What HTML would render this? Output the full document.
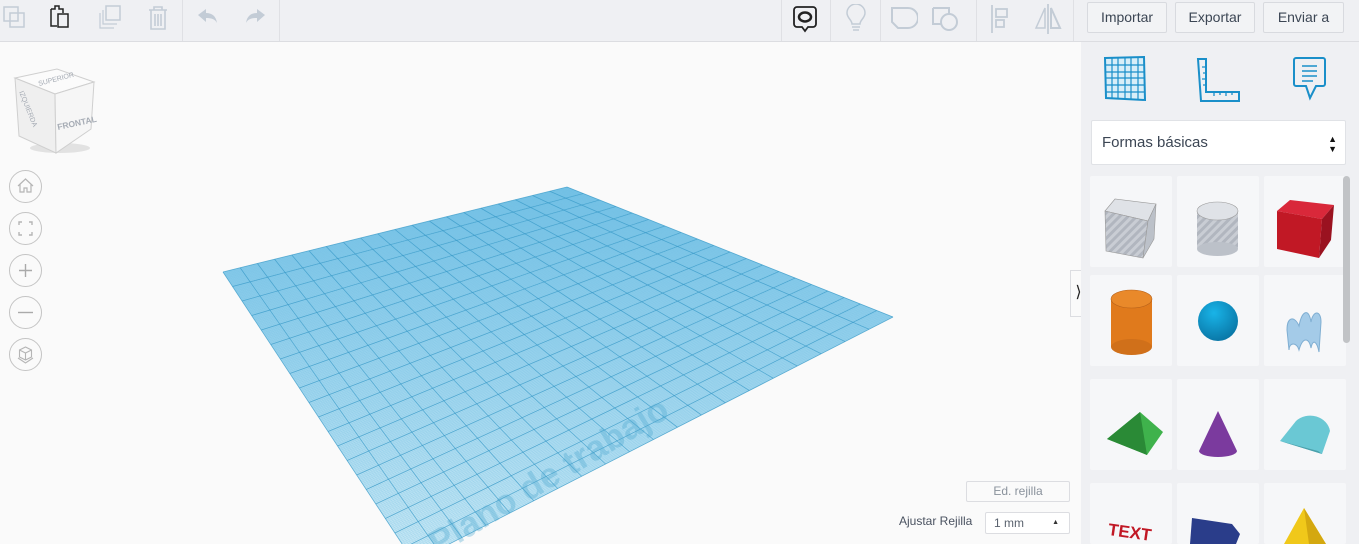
<!DOCTYPE html>
<html><head><meta charset="utf-8"><style>
*{box-sizing:border-box;margin:0;padding:0}
html,body{width:1359px;height:544px;overflow:hidden}
body{background:#fafafa;font-family:"Liberation Sans",sans-serif;position:relative}
.tb{position:absolute;left:0;top:0;width:1359px;height:42px;background:#eff0f3;border-bottom:1px solid #dcdde1}
.sep{position:absolute;top:0;width:1px;height:41px;background:#dfe0e4}
.ic{position:absolute;top:4px}
.btn{position:absolute;top:2px;height:31px;border:1px solid #d8dadf;border-radius:2px;background:#f2f3f5;font-size:14px;color:#3c4654;line-height:29px;text-align:center}
.panel{position:absolute;left:1081px;top:42px;width:278px;height:502px;background:#eff0f3}
.dd{position:absolute;left:1091px;top:120px;width:255px;height:45px;background:#fff;border:1px solid #e0e2e6;border-radius:2px;font-size:15px;color:#3c4654;line-height:43px;padding-left:10px}
.tile{position:absolute;width:82px;height:91px;background:#f6f7f9;border-radius:2px;overflow:hidden}
.tile.l{height:61px}
.nav{position:absolute;left:9px;width:33px;height:33px;border:1px solid #c4c4c4;border-radius:50%;background:#fafafa}
</style></head><body>
<svg style="position:absolute;left:0;top:0" width="1081" height="544" id="cv">
<defs><linearGradient id="pg" x1="0" y1="0" x2="0" y2="1"><stop offset="0" stop-color="#6fbfe6"/><stop offset="1" stop-color="#c8e8f5"/></linearGradient></defs>
<polygon points="567,187 893,317 414,562 223,272" fill="url(#pg)"/>
<g id="g"></g>
<text x="0" y="0" transform="translate(438,556) rotate(-31)" font-family="Liberation Sans" font-weight="bold" font-size="35" fill="#4aa5cf" fill-opacity="0.35">Plano de trabajo</text>
</svg>
<script>
(function(){var A=[567,187],B=[893,317],C=[414,562],D=[223,272];
function p(u,v){var x1=D[0]+(A[0]-D[0])*u,y1=D[1]+(A[1]-D[1])*u,x2=C[0]+(B[0]-C[0])*u,y2=C[1]+(B[1]-C[1])*u;return[x1+(x2-x1)*v,y1+(y2-y1)*v];}
var s='',N=200;for(var i=0;i<=N;i++){var u=i/N,maj=i%10==0;var st=maj?'stroke="#3c9cc9" stroke-opacity="0.8" stroke-width="0.8"':'stroke="#7cc4e4" stroke-opacity="0.45" stroke-width="0.4"';
var a=p(u,0),b=p(u,1);s+='<line x1="'+a[0]+'" y1="'+a[1]+'" x2="'+b[0]+'" y2="'+b[1]+'" '+st+'/>';
a=p(0,u);b=p(1,u);s+='<line x1="'+a[0]+'" y1="'+a[1]+'" x2="'+b[0]+'" y2="'+b[1]+'" '+st+'/>';}
document.getElementById('g').innerHTML=s;})();
</script>
<div class="tb">
<svg class="ic" style="left:3px" width="24" height="26"><rect x="1" y="3" width="14" height="14" fill="none" stroke="#c3ccd6" stroke-width="1.5"/><rect x="7" y="9" width="14" height="14" fill="none" stroke="#c3ccd6" stroke-width="1.5"/></svg>
<svg class="ic" style="left:49px" width="24" height="26"><path d="M2 5h4v-3h4v3h4v4M2 5v17h6" fill="none" stroke="#222" stroke-width="1.5"/><rect x="9" y="10" width="10" height="13" fill="none" stroke="#222" stroke-width="1.5"/></svg>
<svg class="ic" style="left:97px" width="26" height="26"><rect x="9" y="2" width="14" height="14" fill="none" stroke="#c3ccd6" stroke-width="1.5"/><path d="M6 6v14h14M3 9v15h14" fill="none" stroke="#c3ccd6" stroke-width="1.2"/></svg>
<svg class="ic" style="left:147px" width="22" height="28"><path d="M2 6h18M7 6v-3h8v3M4 6v19h14v-19M8 10v12M11 10v12M14 10v12" fill="none" stroke="#c3ccd6" stroke-width="1.6"/></svg>
<div class="sep" style="left:182px"></div>
<svg class="ic" style="left:196px;top:8px" width="24" height="18"><path d="M2 7l8-6v4c6 0 10 3 11 10c-2-4-6-5-11-5v4z" fill="#c3ccd6"/></svg>
<svg class="ic" style="left:243px;top:8px" width="24" height="18"><path d="M22 7l-8-6v4c-6 0-10 3-11 10c2-4 6-5 11-5v4z" fill="#c3ccd6"/></svg>
<div class="sep" style="left:279px"></div>
<div class="sep" style="left:781px"></div>
<svg class="ic" style="left:793px;top:5px" width="24" height="30"><path d="M4 2h16a3 3 0 0 1 3 3v14a3 3 0 0 1-3 3h-5l-3 4l-3-4h-5a3 3 0 0 1-3-3v-14a3 3 0 0 1 3-3z" fill="none" stroke="#222" stroke-width="1.8"/><ellipse cx="12" cy="12" rx="6" ry="4.5" fill="none" stroke="#222" stroke-width="2.5"/></svg>
<div class="sep" style="left:830px"></div>
<svg class="ic" style="left:845px" width="22" height="30"><path d="M7 20c0-4-5-6-5-11a9 9 0 0 1 18 0c0 5-5 7-5 11z M7 23h8M8 26h6" fill="none" stroke="#c3ccd6" stroke-width="1.5"/></svg>
<div class="sep" style="left:880px"></div>
<svg class="ic" style="left:890px" width="28" height="30"><path d="M2 4h16a8 8 0 0 1 0 20h-10l-6-6z" fill="none" stroke="#c3ccd6" stroke-width="2"/></svg>
<svg class="ic" style="left:931px" width="30" height="30"><path d="M2 4h16v6M2 4v16h8" fill="none" stroke="#c3ccd6" stroke-width="2"/><circle cx="18" cy="18" r="8" fill="none" stroke="#c3ccd6" stroke-width="2"/></svg>
<div class="sep" style="left:976px"></div>
<svg class="ic" style="left:990px" width="24" height="30"><path d="M2 1v28" stroke="#c3ccd6" stroke-width="1.8"/><rect x="6" y="5" width="11" height="8" fill="none" stroke="#c3ccd6" stroke-width="1.8"/><rect x="6" y="16" width="8" height="7" fill="none" stroke="#c3ccd6" stroke-width="1.8"/></svg>
<svg class="ic" style="left:1033px" width="30" height="30"><path d="M15 0v30" stroke="#c3ccd6" stroke-width="1.8"/><path d="M12 4l-9 20h9z" fill="none" stroke="#c3ccd6" stroke-width="1.5"/><path d="M18 4l9 20h-9z" fill="none" stroke="#c3ccd6" stroke-width="2"/></svg>
<div class="sep" style="left:1073px"></div>
<div class="btn" style="left:1087px;width:80px">Importar</div>
<div class="btn" style="left:1175px;width:80px">Exportar</div>
<div class="btn" style="left:1263px;width:81px">Enviar a</div>
</div>
<svg style="position:absolute;left:10px;top:64px" width="90" height="95">
<ellipse cx="50" cy="84" rx="30" ry="5" fill="#e2e2e2"/>
<path d="M5 14L47 5L84 18L45 30Z" fill="#fbfbfb" stroke="#cfcfcf"/>
<path d="M5 14L45 30L46 89L9 72Z" fill="#efefef" stroke="#cfcfcf"/>
<path d="M45 30L84 18L81 65L46 89Z" fill="#f6f6f6" stroke="#cfcfcf"/>
<text x="48" y="66" transform="rotate(-12 48 66)" font-size="8.5" font-weight="bold" fill="#a6acb5" font-family="Liberation Sans">FRONTAL</text>
<text x="9" y="28" transform="rotate(68 9 28)" font-size="7" fill="#a6acb5" font-family="Liberation Sans">IZQUIERDA</text>
<text x="29" y="22" transform="rotate(-15 29 22)" font-size="7" fill="#a6acb5" font-family="Liberation Sans">SUPERIOR</text>
</svg>
<div class="nav" style="top:170px"><svg width="31" height="31"><path d="M8 15l7.5-7l7.5 7M10 13v8h4v-4h3v4h4v-8" fill="none" stroke="#b5b5b5" stroke-width="1.2"/></svg></div>
<div class="nav" style="top:212px"><svg width="31" height="31"><path d="M9 12v-3h3M19 9h3v3M22 19v3h-3M12 22h-3v-3" fill="none" stroke="#b5b5b5" stroke-width="1.4"/></svg></div>
<div class="nav" style="top:254px"><svg width="31" height="31"><path d="M15.5 9v13M9 15.5h13" stroke="#aaa" stroke-width="1.4"/></svg></div>
<div class="nav" style="top:296px"><svg width="31" height="31"><path d="M8 15.5h15" stroke="#aaa" stroke-width="1.4"/></svg></div>
<div class="nav" style="top:338px"><svg width="31" height="31"><path d="M15.5 8l6 3v7l-6 3l-6-3v-7z M9.5 11l6 3l6-3M15.5 14v7M8 19l7.5 5l7.5-5" fill="none" stroke="#b5b5b5" stroke-width="1.1"/></svg></div>
<div style="position:absolute;left:966px;top:481px;width:104px;height:21px;border:1px solid #dcdde1;background:#fafafa;font-size:12px;color:#8a929c;text-align:center;line-height:19px;border-radius:2px">Ed. rejilla</div>
<div style="position:absolute;left:899px;top:514px;font-size:12px;color:#4a5260">Ajustar Rejilla</div>
<div style="position:absolute;left:985px;top:512px;width:85px;height:22px;border:1px solid #dcdde1;background:#fff;font-size:12px;color:#5a626e;line-height:20px;padding-left:8px;border-radius:2px">1 mm<span style="position:absolute;right:10px;top:0;font-size:7px;color:#333">▲</span></div>
<div style="position:absolute;left:1070px;top:270px;width:16px;height:47px;background:#fafafa;border:1px solid #dcdde1;border-right:none;font-size:16px;line-height:44px;text-align:center;color:#222">&#x27E9;</div>
<div class="panel"></div>
<svg style="position:absolute;left:1102px;top:55px" width="46" height="48"><path d="M3 3l39-1l1 43l-39-2z" fill="#d8eef8" stroke="#1a8fc9" stroke-width="2"/><g stroke="#1a8fc9" stroke-width="1.2"><path d="M10 3v40M16 3v41M23 3v41M29 3v41M36 3v42M3 10h40M3 17h40M3 23h40M4 30h39M4 37h39"/></g></svg>
<svg style="position:absolute;left:1196px;top:57px" width="46" height="46"><path d="M2 2h8v33h33v9h-38z" fill="none" stroke="#1a8fc9" stroke-width="2"/><path d="M10 10h-4M10 16h-3M10 22h-4M10 28h-3M18 35v4M24 35v3M30 35v4M36 35v3" stroke="#1a8fc9" stroke-width="1.3"/></svg>
<svg style="position:absolute;left:1292px;top:56px" width="36" height="46"><path d="M4 2h27a2 2 0 0 1 2 2v24a2 2 0 0 1-2 2h-7l-6 12l-4-12h-10a2 2 0 0 1-2-2v-24a2 2 0 0 1 2-2z" fill="none" stroke="#1a8fc9" stroke-width="2"/><path d="M10 10h15M10 15h15M10 20h15M10 25h11" stroke="#1a8fc9" stroke-width="1.5"/></svg>
<div class="dd">Formas básicas<span style="position:absolute;right:8px;top:0;font-size:9px;line-height:10px;padding-top:13px;color:#111">▲<br>▼</span></div>
<div class="tile" style="left:1090px;top:176px"><svg width="82" height="91"><defs><pattern id="st" width="6" height="6" patternUnits="userSpaceOnUse" patternTransform="rotate(45)"><rect width="6" height="6" fill="#c9cdd4"/><rect width="3" height="6" fill="#b1b6bf"/></pattern></defs><path d="M15 35l10-12l41 5l-8 17z" fill="#dfe2e7" stroke="#999" stroke-width=".6"/><path d="M15 35l43 10l-5 37l-37-7z" fill="url(#st)" stroke="#999" stroke-width=".6"/><path d="M58 45l8-17l-2 35l-11 19z" fill="#bcc1c9" stroke="#999" stroke-width=".6"/></svg></div>
<div class="tile" style="left:1177px;top:176px"><svg width="82" height="91"><rect x="20" y="35" width="41" height="38" fill="url(#st)"/><ellipse cx="40.5" cy="73" rx="20.5" ry="7" fill="#bcc1c9"/><ellipse cx="40.5" cy="35" rx="20.5" ry="9" fill="#dfe2e7" stroke="#999" stroke-width=".6"/></svg></div>
<div class="tile" style="left:1264px;top:176px"><svg width="82" height="91"><path d="M13 35l13-11l44 5l-12 14z" fill="#d9283a"/><path d="M13 35l45 8l-3 39l-42-9z" fill="#c11825"/><path d="M58 43l12-14l-3 35l-12 18z" fill="#9a1220"/></svg></div>
<div class="tile" style="left:1090px;top:275px"><svg width="82" height="91"><rect x="21" y="24" width="41" height="48" fill="#e07a1c"/><ellipse cx="41.5" cy="72" rx="20.5" ry="8" fill="#d0701a"/><ellipse cx="41.5" cy="24" rx="20.5" ry="9" fill="#e9892a" stroke="#b5601a" stroke-width=".6"/></svg></div>
<div class="tile" style="left:1177px;top:275px"><svg width="82" height="91"><defs><radialGradient id="sp" cx=".4" cy=".3" r=".7"><stop offset="0" stop-color="#19b4e8"/><stop offset="1" stop-color="#0a78a8"/></radialGradient></defs><circle cx="41" cy="46" r="20" fill="url(#sp)"/></svg></div>
<div class="tile" style="left:1264px;top:275px"><svg width="82" height="91"><path d="M23 55c0-14 8-14 12-4c3-16 10-18 12-4c2-12 10-12 10 0l-2 30c-2-10-6-14-8-4c-2-10-8-12-12 2c-2-8-10-8-10 0z" fill="#a4cbe8" stroke="#7faed2" stroke-width="1"/></svg></div>
<div class="tile" style="left:1090px;top:379px"><svg width="82" height="91"><path d="M17 60l33-27l23 20l-16 23z" fill="#3fb24c"/><path d="M17 60l40 16l-7-43z" fill="#2a8a36"/></svg></div>
<div class="tile" style="left:1177px;top:379px"><svg width="82" height="91"><path d="M41 32l-19 40a19 6 0 0 0 38 0z" fill="#7b3a9e"/></svg></div>
<div class="tile" style="left:1264px;top:379px"><svg width="82" height="91"><path d="M16 62l16-20a20 18 0 0 1 34 10l-8 23z" fill="#6ac8d4"/><path d="M16 62l42 13l-4-3z" fill="#4aa0ab"/></svg></div>
<div class="tile l" style="left:1090px;top:483px"><svg width="82" height="61"><text x="18" y="55" font-size="17" font-weight="bold" fill="#c11825" transform="rotate(8 40 50)" font-family="Liberation Sans">TEXT</text></svg></div>
<div class="tile l" style="left:1177px;top:483px"><svg width="82" height="61"><path d="M15 35l40 6l8 10l-4 10h-46z" fill="#2a3d8a"/></svg></div>
<div class="tile l" style="left:1264px;top:483px"><svg width="82" height="61"><path d="M40 25l-20 36h42z" fill="#f0c81a"/><path d="M40 25l5 36h17z" fill="#d4a810"/></svg></div>
<div style="position:absolute;left:1343px;top:176px;width:7px;height:167px;background:#c1c3c6;border-radius:4px"></div>
</body></html>
